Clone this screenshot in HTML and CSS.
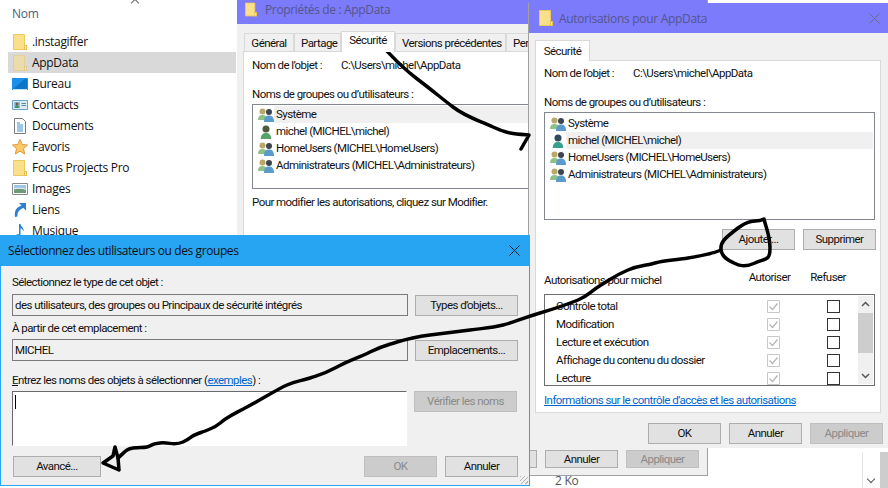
FILE: index.html
```html
<!DOCTYPE html>
<html lang="fr">
<head>
<meta charset="utf-8">
<title>Autorisations pour AppData</title>
<link rel="stylesheet" href="styles.css">
</head>
<body>
<svg class="defs" width="0" height="0">
  <defs>
    <symbol id="folder" viewBox="0 0 14 16"><path d="M.500.500h11v11h2v4h-13z" fill="#fbe08c" stroke="#ecc95e"/><path d="M11 11h3v5h-3z" fill="#e6bf4c"/><path d="M12 12h1v3h-1z" fill="#fff3c4"/></symbol>
    <symbol id="group" viewBox="0 0 16 14">
      <circle cx="4.500" cy="3.500" r="3" fill="#b9a86a"/><path d="M0 12c0-3.500 1.500-5 4.500-5s4.500 1.500 4.500 5z" fill="#8fc088"/>
      <circle cx="11" cy="4" r="3" fill="#3d4650"/><path d="M6 14c0-5 2-6.500 5-6.500s5 1.500 5 6.500z" fill="#5b9bcc"/>
    </symbol>
    <symbol id="user" viewBox="0 0 14 16"><circle cx="7" cy="4.500" r="4" fill="#4d5a3c"/><path d="M1 16c0-5 2.500-7 6-7s6 2 6 7z" fill="#55a56a"/></symbol>
    <symbol id="user-dark" viewBox="0 0 14 16"><circle cx="7" cy="4.500" r="4" fill="#2f4a58"/><path d="M1 16c0-5 2.500-7 6-7s6 2 6 7z" fill="#35a08f"/></symbol>
    <symbol id="check" viewBox="0 0 13 13"><path d="M.500.500h12v12H.500z" fill="#fff" stroke="#c8c8c8"/><path d="M2.500 6.500l3 3 5-6" fill="none" stroke="#b5b5b5" stroke-width="1.200"/></symbol>
  </defs>
</svg>

<div class="desktop">
  <section class="explorer">
    <div class="sort-caret"></div>
    <div class="col-head">Nom</div>
    <ul class="files">
      <li class="file"><svg class="ficon ficon-folder"><use href="#folder"/></svg>.instagiffer</li>
      <li class="file is-selected"><svg class="ficon ficon-folder faded"><use href="#folder"/></svg>AppData</li>
      <li class="file"><svg class="ficon" viewBox="0 0 16 16"><path d="M0 2h16v12H0z" fill="#1b90e8"/><path d="M1 13L13 3h2v10z" fill="#0f75c9"/><path d="M1 13.500h14" stroke="#bfe3fb"/></svg>Bureau</li>
      <li class="file"><svg class="ficon" viewBox="0 0 16 16"><path d="M.500 3.500h15v9H.500z" fill="#d9ecf7" stroke="#6da2c4"/><path d="M2 5h6v6H2z" fill="#8fb9d1"/><circle cx="5" cy="7" r="1.500" fill="#7a5a40"/><path d="M3 11c0-2 1-2.500 2-2.500s2 .5 2 2.500z" fill="#3f8f5f"/><path d="M9.500 6.500h4.500M9.500 8.500h4.500" stroke="#5c87a8"/></svg>Contacts</li>
      <li class="file"><svg class="ficon" viewBox="0 0 16 16"><path d="M2.500.500h8l3 3v12h-11z" fill="#fff" stroke="#7b7b7b"/><path d="M5 5h3M5 7h6M5 9h6M5 11h6M5 13h6" stroke="#3a8fd6"/></svg>Documents</li>
      <li class="file"><svg class="ficon" viewBox="0 0 16 16"><path d="M8 .500l2.200 5 5.300.5-4 3.600 1.200 5.400L8 12.200 3.300 15l1.200-5.400-4-3.600 5.300-.5z" fill="#fbc867" stroke="#d99a3c"/></svg>Favoris</li>
      <li class="file"><svg class="ficon ficon-folder"><use href="#folder"/></svg>Focus Projects Pro</li>
      <li class="file"><svg class="ficon" viewBox="0 0 16 16"><path d="M.500 2.500h15v11H.500z" fill="#fff" stroke="#8a8a8a"/><path d="M2 4h12v4H2z" fill="#9cc5e6"/><path d="M2 8h12v4H2z" fill="#6f9a7a"/><path d="M2 8c4-1.500 8-1 12 .5" stroke="#e8eef0" fill="none"/></svg>Images</li>
      <li class="file"><svg class="ficon" viewBox="0 0 16 16"><path d="M14 1H7l2.500 2.500C5 5 2 8 3 15l2.500-.5C5 10 7.500 7.500 11.500 6L14 8.500z" fill="#2f7fd0"/></svg>Liens</li>
      <li class="file"><svg class="ficon" viewBox="0 0 16 16"><path d="M7 1h1.500c.5 3 4 4 3 7.500-.5-2-2-3-3-3.200V13c0 1.500-1.500 2.500-3.500 2.500S3 14.500 3.500 13 5.500 11 7 11.500z" fill="#1f86dc"/></svg>Musique</li>
    </ul>
    <div class="size-label">2 Ko</div>
    <div class="ex-scroll"><span class="chev-down"></span><span class="ex-thumb"></span></div>
  </section>

  <section class="window props">
    <header class="titlebar tb-inactive tb-props"><svg class="tb-icon-small"><use href="#folder"/></svg><span>Propriétés de : AppData</span></header>
    <div class="tabs">
      <span class="tab tab-gen">Général</span><span class="tab tab-par">Partage</span><span class="tab tab-active">Sécurité</span><span class="tab tab-ver">Versions précédentes</span><span class="tab">Personnaliser</span>
    </div>
    <div class="panel props-panel">
      <div class="obj"><span class="obj-k">Nom de l’objet :</span><span>C:\Users\michel\AppData</span></div>
      <div class="lbl-groups">Noms de groupes ou d’utilisateurs :</div>
      <ul class="listbox props-list">
        <li class="row row-sel"><svg class="uicon"><use href="#group"/></svg><span class="row-text">Système</span></li>
        <li class="row"><svg class="uicon"><use href="#user"/></svg><span class="row-text">michel (MICHEL\michel)</span></li>
        <li class="row"><svg class="uicon"><use href="#group"/></svg><span class="row-text">HomeUsers (MICHEL\HomeUsers)</span></li>
        <li class="row"><svg class="uicon"><use href="#group"/></svg><span class="row-text">Administrateurs (MICHEL\Administrateurs)</span></li>
      </ul>
      <p class="hint">Pour modifier les autorisations, cliquez sur Modifier.</p>
    </div>
    <footer class="props-foot"><button class="btn">OK</button><button class="btn">Annuler</button><button class="btn" disabled>Appliquer</button></footer>
  </section>

  <section class="window perms">
    <header class="titlebar tb-inactive tb-perms"><svg class="tb-icon"><use href="#folder"/></svg><span>Autorisations pour AppData</span><svg class="close" viewBox="0 0 11 11"><path d="M.500.500l10 10M10.500.500l-10 10" stroke="#6b6b8f" fill="none"/></svg></header>
    <div class="perm-tabs"><span class="tab tab-solo">Sécurité</span></div>
    <div class="panel perm-panel">
      <div class="obj"><span class="obj-k">Nom de l’objet :</span><span>C:\Users\michel\AppData</span></div>
      <div class="lbl-groups">Noms de groupes ou d’utilisateurs :</div>
      <ul class="listbox perm-list">
        <li class="row"><svg class="uicon"><use href="#group"/></svg><span class="row-text">Système</span></li>
        <li class="row row-sel"><svg class="uicon"><use href="#user-dark"/></svg><span class="row-text">michel (MICHEL\michel)</span></li>
        <li class="row"><svg class="uicon"><use href="#group"/></svg><span class="row-text">HomeUsers (MICHEL\HomeUsers)</span></li>
        <li class="row"><svg class="uicon"><use href="#group"/></svg><span class="row-text">Administrateurs (MICHEL\Administrateurs)</span></li>
      </ul>
      <div class="perm-actions"><button class="btn">Ajouter...</button><button class="btn">Supprimer</button></div>
      <div class="ace-head"><span class="ace-title">Autorisations pour michel</span><span class="ace-col">Autoriser</span><span class="ace-col">Refuser</span></div>
      <div class="ace-box">
        <ul class="ace-list">
          <li class="ace"><span class="ace-name">Contrôle total</span><svg class="cb"><use href="#check"/></svg><span class="cb-empty"></span></li>
          <li class="ace"><span class="ace-name">Modification</span><svg class="cb"><use href="#check"/></svg><span class="cb-empty"></span></li>
          <li class="ace"><span class="ace-name">Lecture et exécution</span><svg class="cb"><use href="#check"/></svg><span class="cb-empty"></span></li>
          <li class="ace"><span class="ace-name">Affichage du contenu du dossier</span><svg class="cb"><use href="#check"/></svg><span class="cb-empty"></span></li>
          <li class="ace"><span class="ace-name">Lecture</span><svg class="cb"><use href="#check"/></svg><span class="cb-empty"></span></li>
        </ul>
        <div class="vscroll">
          <svg class="chev" viewBox="0 0 9 6"><path d="M1 5l3.500-3.500L8 5" fill="none" stroke="#555" stroke-width="1.500"/></svg>
          <span class="vthumb"></span>
          <svg class="chev chev-end" viewBox="0 0 9 6"><path d="M1 1l3.500 3.500L8 1" fill="none" stroke="#555" stroke-width="1.500"/></svg>
        </div>
      </div>
      <a class="link info-link">Informations sur le contrôle d’accès et les autorisations</a>
    </div>
    <footer class="perm-foot"><button class="btn">OK</button><button class="btn">Annuler</button><button class="btn" disabled>Appliquer</button></footer>
  </section>

  <section class="window select">
    <header class="titlebar tb-active"><span>Sélectionnez des utilisateurs ou des groupes</span><svg class="close" viewBox="0 0 11 11"><path d="M.500.500l10 10M10.500.500l-10 10" stroke="#111" fill="none"/></svg></header>
    <div class="sel-body">
      <div class="sel-label">Sélectionnez le type de cet objet :</div>
      <div class="sel-row"><div class="field">des utilisateurs, des groupes ou Principaux de sécurité intégrés</div><button class="btn btn-side">Types d’objets...</button></div>
      <div class="sel-label sel-label-2">À partir de cet emplacement :</div>
      <div class="sel-row sel-row-2"><div class="field">MICHEL</div><button class="btn btn-side">Emplacements...</button></div>
      <div class="sel-label sel-label-3"><u>E</u>ntrez les noms des objets à sélectionner (<a class="link">exemples</a>) :</div>
      <div class="sel-row sel-row-top"><div class="names"><span class="caret"></span></div><button class="btn btn-side" disabled>Vérifier les noms</button></div>
      <div class="sel-foot"><button class="btn btn-adv">Avancé...</button><span class="spacer"></span><button class="btn" disabled>OK</button><button class="btn">Annuler</button></div>
    </div>
    <span class="grip"></span>
  </section>

  <svg class="scribbles" viewBox="0 0 888 488" aria-hidden="true">
    <g fill="none" stroke="#000" stroke-width="3.500" stroke-linecap="round" stroke-linejoin="round">
      <path d="M384 48C392 56 399 65 416 78S440 97 453 107 478 120 493 127 515 134 529 135L521 149"/>
      <path d="M764 219C766 228 770 235 770 248S766 258 755 263 738 265 734 263 722 258 721 250 725 238 738 228 755 223 764 219"/>
      <path d="M721 250C712 254 700 256 688 258S665 260 655 263 640 265 628 270 614 277 601 285 590 295 578 300 560 307 540 313 515 322 503 325 485 328 470 330 445 333 430 335 410 338 397 342 382 346 370 352 350 360 337 367 322 374 310 378 298 380 287 385 262 399 247 407 235 413 227 418 220 425 210 429 205 431 197 434 192 438 183 442 170 442 160 443 152 446 147 447 140 447 133 448 125 452 118 458"/>
      <path d="M118 458L115 447 113 456 103 463 119 470z"/>
    </g>
  </svg>
</div>
</body>
</html>
```
FILE: styles.css
```css
* { box-sizing: border-box; }
html, body { margin: 0; padding: 0; }
body { width: 888px; height: 488px; overflow: hidden; background: #fff; font: 11.5px/17px Roboto, "Open Sans", sans-serif; letter-spacing: -.55px; color: #111; }
ul { list-style: none; margin: 0; padding: 0; }
p { margin: 0; }
.defs { position: absolute; }
.desktop { position: relative; width: 888px; height: 488px; overflow: hidden; }

.explorer { position: absolute; inset: 0; background: #fff; padding: 0 0 0 8px; font: 12px/17px "Open Sans", sans-serif; letter-spacing: -.3px; }
.sort-caret { position: absolute; left: 132px; top: 0; width: 6px; height: 6px; border-left: 1px solid #666; border-top: 1px solid #666; transform: rotate(45deg); }
.col-head { padding: 5px 0 0 4px; height: 21px; color: #4c607a; line-height: 17px; }
.files { width: 228px; padding-top: 10px; }
.file { display: flex; align-items: center; gap: 4px; height: 21px; padding-left: 4px; color: #111; }
.is-selected { background: #d9d9d9; }
.ficon { width: 16px; height: 16px; flex: none; }
.ficon-folder { padding: 0; }
.faded { opacity: .55; }
.size-label { position: absolute; left: 555px; top: 475px; color: #555; line-height: 12px; }
.ex-scroll { position: absolute; right: 0; top: 452px; bottom: 0; width: 26px; border-left: 1px solid #e4e4e4; }
.chev-down { position: absolute; left: 5px; top: 24px; width: 6px; height: 6px; border-right: 1px solid #555; border-bottom: 1px solid #555; transform: rotate(45deg); }
.ex-thumb { position: absolute; right: 0; top: 0; width: 8px; bottom: 0; background: #cdcdcd; }

.window { position: absolute; background: #f0f0f0; }
.titlebar { display: flex; align-items: center; }
.tb-inactive { background: #7b7bfb; color: #55558c; font: 12px/17px "Open Sans", sans-serif; }
.tb-props { height: 24px; padding: 0 0 6px 8px; gap: 8px; letter-spacing: -.35px; }
.tb-perms { height: 30px; padding-left: 10px; gap: 6px; letter-spacing: -.3px; }
.tb-icon { width: 14px; height: 16px; }
.tb-icon-small { width: 12px; height: 15px; }
.tb-perms .close { margin-left: auto; margin-right: 8px; }
.close { width: 11px; height: 11px; flex: none; }

.props { left: 237px; top: 0; width: 471px; height: 476px; border: 1px solid #a0a0a0; border-top: 0; border-left: 0; }
.tabs { display: flex; height: 27px; padding: 9px 0 0 7px; position: relative; }
.tab { display: block; height: 18px; padding: 0 6px; line-height: 18px; background: #f0f0f0; border: 1px solid #d9d9d9; border-bottom: 0; white-space: nowrap; text-align: center; }
.tab-gen { width: 50px; }
.tab-par { width: 47px; }
.tab-ver { width: 111px; }
.tab-active { width: 54px; height: 21px; margin-top: -2px; padding: 0 6px; background: #fff; line-height: 16px; position: relative; z-index: 1; }
.props-panel { position: absolute; left: 6px; top: 51px; width: 460px; height: 368px; background: #fff; border: 1px solid #d9d9d9; padding: 5px 8px; }
.obj { display: flex; height: 17px; }
.obj-k { width: 89px; flex: none; }
.lbl-groups { margin-top: 12px; height: 17px; }
.listbox { border: 1px solid #828790; background: #fff; margin-top: 1px; padding: 2px 1px 0 5px; }
.props-list { height: 85px; width: 400px; padding-top: 1px; }
.perm-list { height: 108px; width: 331px; }
.row { display: flex; align-items: center; height: 17px; white-space: nowrap; }
.uicon { width: 16px; height: 14px; flex: none; }
.row-text { flex: 1; height: 17px; padding-left: 2px; }
.row-sel .row-text { background: #f0f0f0; }
.hint { margin-top: 5px; }
.props-foot { position: absolute; top: 450px; right: 8px; display: flex; gap: 8px; }
.props-foot .btn { height: 18px; }

.btn { display: block; width: 73px; height: 21px; padding: 0; border: 1px solid #adadad; background: #e1e1e1; font: inherit; letter-spacing: inherit; line-height: 17px; color: #111; }
.btn:disabled { background: #cccccc; border-color: #bfbfbf; color: #8a8a8a; }

.perms { left: 528px; top: 3px; width: 360px; height: 445px; border-left: 1px solid #a0a0a0; }
.perm-tabs { height: 27px; padding: 7px 0 0 6px; }
.tab-solo { display: inline-block; height: 21px; background: #fff; padding: 0 6px; width: 55px; position: relative; z-index: 1; line-height: 20px; }
.perm-panel { height: 353px; width: 346px; margin-left: 6px; background: #fff; border: 1px solid #d9d9d9; padding: 4px 8px 0; }
.perm-actions { display: flex; justify-content: flex-end; gap: 8px; margin-top: 9px; width: 332px; }
.ace-head { display: flex; align-items: flex-start; margin-top: 19px; height: 25px; }
.ace-title { width: 209px; padding-top: 3px; }
.ace-col { width: 63px; }
.ace-box { display: flex; width: 331px; height: 92px; border: 1px solid #6f6f6f; background: #fff; padding: 1px; }
.ace-list { flex: 1; padding: 1px 0 0 10px; }
.ace { display: flex; align-items: center; height: 18px; }
.ace-name { width: 211px; flex: none; }
.cb { width: 13px; height: 13px; margin-right: 47px; flex: none; }
.cb-empty { width: 13px; height: 13px; border: 1px solid #333; background: #fff; flex: none; }
.vscroll { width: 15px; display: flex; flex-direction: column; align-items: center; background: #f0f0f0; padding-top: 5px; }
.chev { width: 9px; height: 6px; flex: none; }
.vthumb { display: block; width: 15px; height: 40px; margin-top: 6px; background: #cdcdcd; }
.chev-end { margin-top: auto; margin-bottom: 5px; }
.link { color: #0066cc; text-decoration: underline; }
.info-link { display: block; margin-top: 6px; }
.perm-foot { display: flex; justify-content: flex-end; gap: 8px; padding: 10px 5px 0 0; }

.select { left: 0; top: 235px; width: 530px; height: 251px; border: 1px solid #27a4f2; }
.tb-active { height: 31px; background: #27a4f2; color: #111; padding: 0 10px 0 8px; justify-content: space-between; font: 12px/17px "Open Sans", sans-serif; letter-spacing: -.4px; margin: -1px -1px 0; }
.sel-body { padding: 8px 11px 0 11px; }
.sel-label { height: 17px; }
.sel-label-2 { margin-top: 4px; }
.sel-label-3 { margin-top: 11px; }
.sel-row { display: flex; gap: 7px; margin-top: 3px; align-items: center; }
.sel-row-2 { margin-top: 2px; }
.sel-row-top { align-items: flex-start; margin-top: 2px; }
.field { width: 396px; height: 22px; border: 1px solid #7a7a7a; background: #f0f0f0; line-height: 20px; padding-left: 2px; white-space: nowrap; }
.btn-side { width: 103px; height: 21px; }
.names { width: 395px; height: 55px; border: 1px solid #fff; border-top: 1px solid #6a6a6a; border-left: 1px solid #6a6a6a; background: #fff; padding: 3px 0 0 2px; }
.caret { display: block; width: 1px; height: 14px; background: #000; }
.sel-foot { display: flex; gap: 8px; margin-top: 10px; padding-left: 1px; }
.btn-adv { width: 88px; }
.spacer { flex: 1; }
.grip { position: absolute; right: 1px; bottom: 1px; width: 8px; height: 8px; background: repeating-linear-gradient(135deg, #b5b5b5 0 1px, transparent 1px 3px); }

.scribbles { position: absolute; inset: 0; width: 888px; height: 488px; pointer-events: none; }
```
